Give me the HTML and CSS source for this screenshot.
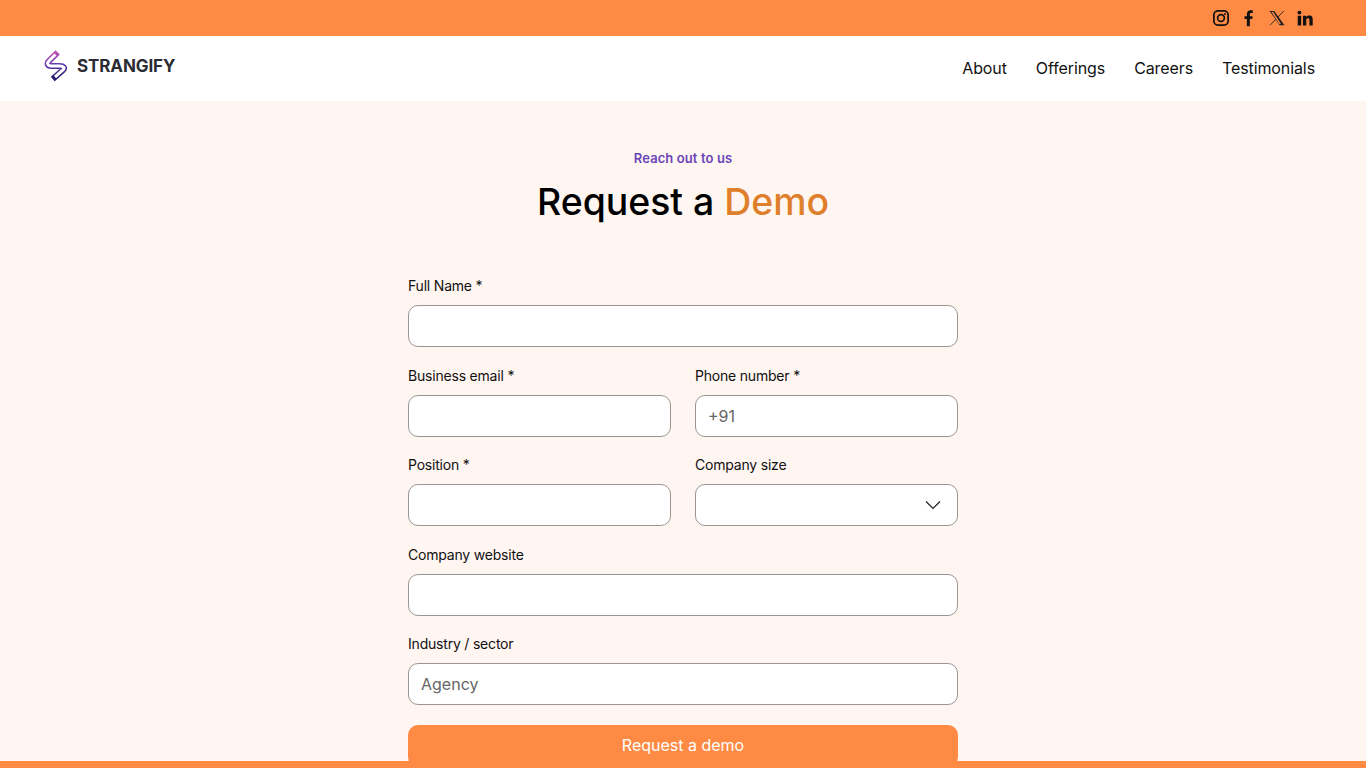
FILE: index.html
```html
<!DOCTYPE html>
<html lang="en">
<head>
<meta charset="utf-8">
<title>Strangify - Request a Demo</title>
<link rel="stylesheet" href="styles.css">
</head>
<body>
<div class="topbar">
  <a class="social" href="#" aria-label="Instagram"><svg viewBox="0 0 24 24" width="18" height="18"><rect x="2.500" y="2.500" width="19" height="19" rx="5.500" fill="none" stroke="#111" stroke-width="2.300"/><circle cx="12" cy="12" r="4.500" fill="none" stroke="#111" stroke-width="2.200"/><circle cx="17.300" cy="6.700" r="1.300" fill="#111"/></svg></a>
  <a class="social" href="#" aria-label="Facebook"><svg viewBox="0 0 24 24" width="18" height="18"><path d="M9.200 23V13.400H6V9.600h3.200V6.900C9.200 3.600 11.200 1.800 14.100 1.800c1.400 0 2.600.1 2.900.15v3.400h-2c-1.600 0-1.900.75-1.900 1.850v2.400h3.700l-.5 3.800h-3.200V23z" fill="#111"/></svg></a>
  <a class="social" href="#" aria-label="X"><svg viewBox="0 0 24 24" width="18" height="18"><path d="M2 2.500h6.400l13.600 19h-6.400zM4.700 3.900l10.300 16.200h2.300L7 3.900z" fill="#222" fill-rule="evenodd"/><path d="M21 2.500 13.300 10.900M10.700 13.600 2.800 21.500" stroke="#222" stroke-width="1.200" fill="none"/></svg></a>
  <a class="social" href="#" aria-label="LinkedIn"><svg viewBox="0 0 24 24" width="18" height="18"><circle cx="4.600" cy="4.800" r="2.600" fill="#111"/><rect x="2.300" y="9" width="4.600" height="13" fill="#111"/><path d="M9.300 9h4.300v1.800c.7-1.200 2.200-2.100 4.100-2.100 4 0 4.600 2.600 4.600 6V22h-4.400v-6.400c0-1.600-.1-3.300-2.100-3.300s-2.100 1.600-2.100 3.200V22H9.300z" fill="#111"/></svg></a>
</div>
<header class="header">
  <a class="brand" href="#">
    <svg class="brand-mark" viewBox="0 0 24 32" width="24" height="32"><defs><linearGradient id="g" gradientUnits="userSpaceOnUse" x1="6" y1="1" x2="12" y2="30"><stop offset="0" stop-color="#d04fb0"/><stop offset="0.450" stop-color="#6a3db5"/><stop offset="1" stop-color="#1c1468"/></linearGradient></defs><path d="M11.500 4.500 4.800 11C2.500 13.500 3.800 16 7 16L15.500 16C20 16 21 18 19 20L11 27" fill="none" stroke="url(#g)" stroke-width="6" stroke-linecap="square"/><path d="M11.500 4.500 4.800 11C2.500 13.500 3.800 16 7 16L15.500 16C20 16 21 18 19 20L11 27" fill="none" stroke="#fff" stroke-width="3"/></svg>
    <span class="brand-name">STRANGIFY</span>
  </a>
  <nav class="nav">
    <a href="#">About</a>
    <a href="#">Offerings</a>
    <a href="#">Careers</a>
    <a href="#">Testimonials</a>
  </nav>
</header>
<main class="main">
  <p class="eyebrow">Reach out to us</p>
  <h1 class="title">Request a <span class="accent">Demo</span></h1>
  <form class="form">
    <div class="field wide"><label>Full Name *</label><div class="input"></div></div>
    <div class="field"><label>Business email *</label><div class="input"></div></div>
    <div class="field"><label>Phone number *</label><div class="input placeholder">+91</div></div>
    <div class="field"><label>Position *</label><div class="input"></div></div>
    <div class="field"><label>Company size</label><div class="input select"><svg viewBox="0 0 16 10" width="16" height="10"><path d="M1 1.500 8 8.500 15 1.500" fill="none" stroke="#222" stroke-width="1.200"/></svg></div></div>
    <div class="field wide"><label>Company website</label><div class="input"></div></div>
    <div class="field wide"><label>Industry / sector</label><div class="input placeholder">Agency</div></div>
    <button class="submit" type="button">Request a demo</button>
  </form>
</main>
<div class="bottom-strip"></div>
</body>
</html>
```
FILE: styles.css
```css
* { box-sizing: border-box; }
html, body { margin: 0; height: 768px; overflow: hidden; }
body { background: #fff5f1; font-family: Inter, "Liberation Sans", sans-serif; color: #111; }
a { color: inherit; text-decoration: none; }

.topbar { height: 36px; background: #ff8a44; display: flex; justify-content: flex-end; align-items: center; gap: 10px; padding-right: 52px; }
.social { display: flex; width: 18px; height: 18px; }

.header { height: 65px; background: #fff; display: flex; justify-content: space-between; padding: 0 51px 0 44px; }
.brand { display: flex; align-items: flex-start; gap: 9px; padding-top: 14px; }
.brand-name { font-size: 17px; font-weight: 700; letter-spacing: -0.1px; color: #2b2b33; line-height: 30px; margin-top: 1px; }
.nav { display: flex; gap: 29px; font-size: 16px; letter-spacing: -0.1px; line-height: 20px; padding-top: 22px; color: #111; }

.main { display: flex; flex-direction: column; align-items: center; }
.eyebrow { margin: 49px 0 0; font-size: 13px; font-weight: 600; letter-spacing: 0.1px; line-height: 16px; color: #6a45b8; }
.title { margin: 10.500px 0 0; font-size: 37.400px; font-weight: 500; line-height: 50px; color: #000; }
.accent { color: #df7f2b; }

.form { width: 550px; margin-top: 49.500px; display: grid; grid-template-columns: 1fr 1fr; column-gap: 24px; row-gap: 18.500px; }
.field { display: flex; flex-direction: column; gap: 8.300px; }
.wide { grid-column: 1 / -1; }
.field label { font-size: 14px; letter-spacing: -0.2px; line-height: 20.700px; color: #111; }
.input { height: 42px; background: #fff; border: 1px solid #9a9693; border-radius: 10px; padding: 0 12px; display: flex; align-items: center; font-size: 16px; }
.placeholder { color: #666; }
.select { justify-content: flex-end; padding-right: 16px; }
.submit { grid-column: 1 / -1; height: 42px; margin-top: 1.500px; padding-bottom: 4px; border: 0; border-radius: 10px; background: #ff8a44; color: #fff; font: 16px Inter, sans-serif; position: relative; z-index: 1; }

.bottom-strip { position: fixed; left: 0; right: 0; bottom: 0; height: 7px; background: #ff8a44; }
```
